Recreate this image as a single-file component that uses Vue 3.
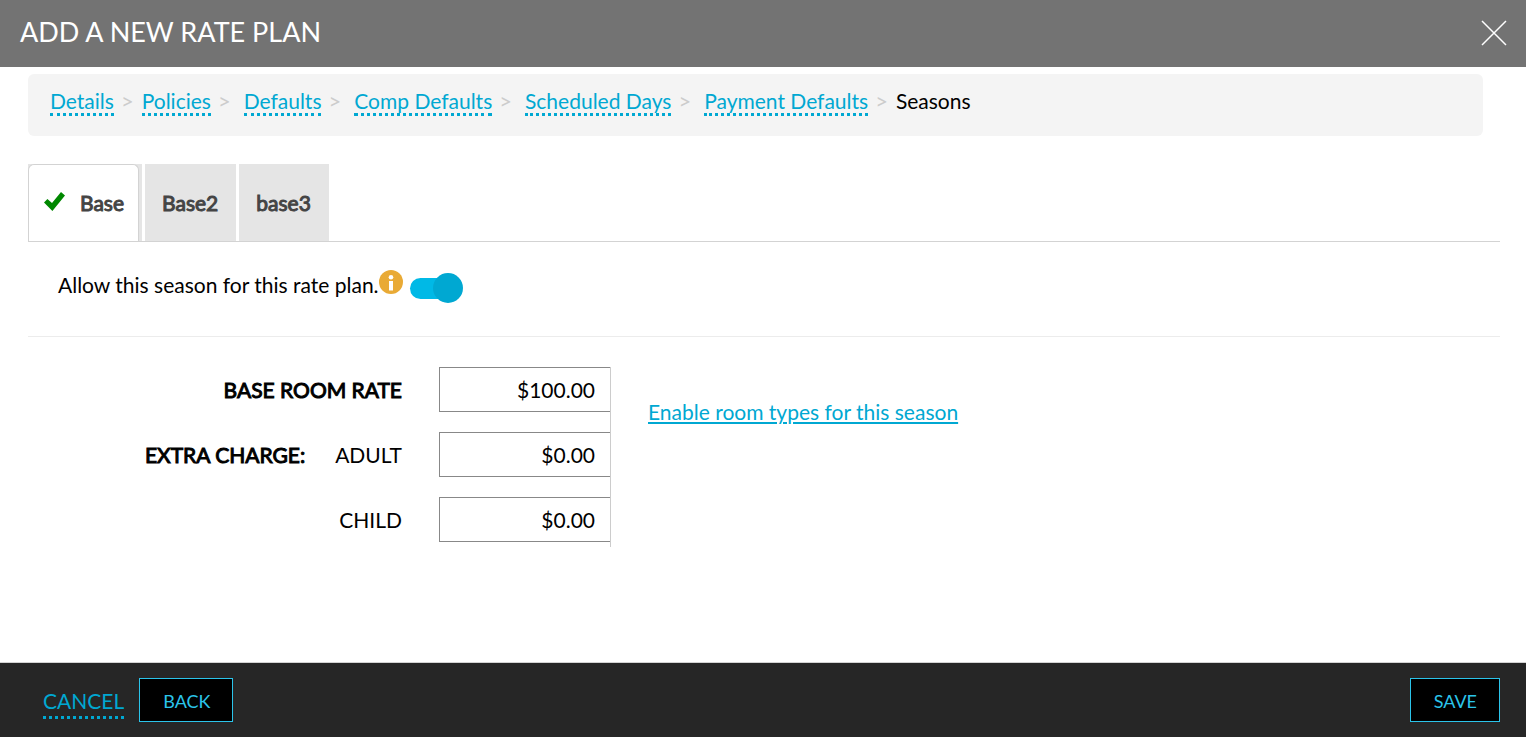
<script setup>
import { ref } from 'vue'

const crumbs = ['Details', 'Policies', 'Defaults', 'Comp Defaults', 'Scheduled Days', 'Payment Defaults']
const tabs = ['Base', 'Base2', 'base3']
const active = ref('Base')
const allowed = ref(true)
const base = ref('$100.00')
const adult = ref('$0.00')
const child = ref('$0.00')
</script>

<template>
  <div class="page">
    <header class="header">
      <h1>ADD A NEW RATE PLAN</h1>
      <button class="close" type="button" aria-label="Close">
        <svg width="26" height="26" viewBox="0 0 26 26" aria-hidden="true">
          <path d="M1 1L25 25M25 1L1 25" fill="none" stroke="#fff" stroke-width="1.5" />
        </svg>
      </button>
    </header>

    <main class="main">
      <nav class="crumbs" aria-label="Steps">
        <span v-for="c in crumbs" :key="c" class="crumb">
          <a href="#">{{ c }}</a><span class="sep">&gt;</span>
        </span>
        <span class="current">Seasons</span>
      </nav>

      <div class="tabs" role="tablist">
        <div v-for="t in tabs" :key="t" class="slot" :class="{ on: t === active }">
          <button class="tab" type="button" role="tab" :aria-selected="t === active" @click="active = t">
            <svg v-if="t === 'Base'" class="check" width="21" height="19" viewBox="0 0 21 19" aria-hidden="true">
              <path d="M0 10.5L3.4 7L8 11L17 0L21 3.4L8.4 19Z" fill="#008800" />
            </svg>
            {{ t }}
          </button>
        </div>
      </div>

      <section class="allow">
        <label for="allow">Allow this season for this rate plan.</label>
        <svg class="info" width="24" height="24" viewBox="0 0 24 24" aria-hidden="true">
          <circle cx="12" cy="12" r="12" fill="#e9aa35" />
          <circle cx="12" cy="7.2" r="2.3" fill="#fff" />
          <path d="M10 11H14V20.500H10Z" fill="#fff" />
        </svg>
        <input id="allow" v-model="allowed" class="switch" type="checkbox" role="switch" />
      </section>

      <section class="rates">
        <div class="fields">
          <div class="row">
            <label for="base"><b>BASE ROOM RATE</b></label>
            <input id="base" v-model="base" type="text" />
          </div>
          <div class="row">
            <label for="adult"><b>EXTRA CHARGE:</b><span class="kind">ADULT</span></label>
            <input id="adult" v-model="adult" type="text" />
          </div>
          <div class="row">
            <label for="child">CHILD</label>
            <input id="child" v-model="child" type="text" />
          </div>
        </div>
        <a class="enable" href="#">Enable room types for this season</a>
      </section>
    </main>

    <footer class="footer">
      <a class="cancel" href="#">CANCEL</a>
      <button class="btn" type="button">BACK</button>
      <button class="btn save" type="button">SAVE</button>
    </footer>
  </div>
</template>

<style>
body {
  margin: 0;
  background: #fff;
}
</style>

<style scoped>
.page {
  display: flex;
  flex-direction: column;
  min-height: 100vh;
  font-family: Lato, "Liberation Sans", sans-serif;
  font-size: 21px;
  line-height: 26px;
  color: #000;
}
.page * {
  box-sizing: border-box;
}
button,
input {
  font: inherit;
  margin: 0;
}
b {
  font-weight: 400;
  -webkit-text-stroke: 1px #000;
}
a {
  color: #00a8d2;
  text-decoration: none;
}
.header {
  display: flex;
  align-items: center;
  justify-content: space-between;
  height: 67px;
  padding: 0 19px 2px 20px;
  background: #737373;
}
h1 {
  margin: 0 0 2px;
  font-size: 27px;
  font-weight: 400;
  line-height: 34px;
  color: #fff;
}
.close {
  display: flex;
  padding: 0;
  border: 0;
  background: none;
  cursor: pointer;
}
.main {
  flex: 1;
  padding: 7px 26px 0 28px;
}
.crumbs {
  display: flex;
  align-items: flex-start;
  height: 62px;
  margin-right: 17px;
  padding: 14px 22px;
  border-radius: 6px;
  background: #f4f4f4;
}
.crumb {
  display: flex;
  margin-right: 13px;
}
.crumb:first-child,
.crumb:nth-child(6) {
  margin-right: 8px;
}
.crumb a {
  height: 28px;
  border-bottom: 3px dotted #00a8d2;
}
.sep {
  margin-left: 7px;
  font-size: 22px;
  color: #ccc;
}
.tabs {
  display: flex;
  gap: 3px;
  margin-top: 28px;
  border-bottom: 1px solid #d3d3d3;
}
.slot {
  background: #e5e5e5;
}
.slot.on {
  padding-right: 3px;
}
.tab {
  display: flex;
  align-items: center;
  height: 77px;
  padding: 0 17px 0 16px;
  border: 1px solid transparent;
  border-bottom: 0;
  background: none;
  color: #444;
  -webkit-text-stroke: 1px #444;
}
.on .tab {
  padding-right: 14px;
  padding-left: 15px;
  border-color: #d3d3d3;
  border-radius: 6px 6px 0 0;
  background: #fff;
}
.check {
  margin: 0 15px 3px 0;
}
.allow {
  display: flex;
  align-items: center;
  height: 95px;
  padding: 0 0 2px 30px;
  border-bottom: 1px solid #ececec;
}
.allow label {
  margin-bottom: 6px;
}
.info {
  margin: 0 7px 12px 0;
}
.switch {
  display: flex;
  align-items: center;
  width: 53px;
  height: 30px;
  appearance: none;
}
.switch::before {
  content: "";
  flex: none;
  width: 44px;
  height: 21px;
  border-radius: 11px;
  background: #00b9e6;
}
.switch::after {
  content: "";
  flex: none;
  width: 30px;
  height: 30px;
  margin-left: -44px;
  border-radius: 50%;
  background: #00a8d2;
}
.switch:checked::after {
  margin-left: -21px;
}
.rates {
  display: flex;
  align-items: flex-start;
  padding-top: 30px;
}
.fields {
  display: flex;
  flex-direction: column;
  gap: 20px;
  width: 583px;
  padding-bottom: 5px;
  border-right: 1px solid #ccc;
}
.row {
  display: flex;
  align-items: center;
  justify-content: flex-end;
  gap: 37px;
}
.kind {
  margin-left: 30px;
}
.row input {
  width: 171px;
  height: 45px;
  padding: 0 15px;
  border: 1px solid #888;
  border-right: 0;
  border-radius: 0;
  background: #fff;
  color: #000;
  text-align: right;
}
.enable {
  margin: 32px 0 0 37px;
  text-decoration: underline;
}
.footer {
  display: flex;
  align-items: center;
  height: 75px;
  padding: 0 26px 0 43px;
  border-top: 1px solid #d3d3d3;
  background: #262626;
}
.cancel {
  margin-right: 15px;
  padding: 6px 0 2px;
  border-bottom: 3px dotted #00a8d2;
}
.btn {
  height: 44px;
  padding: 2px 22px 0 23px;
  border: 1px solid #2bc4ea;
  background: #000;
  color: #2bc4ea;
  font-size: 18px;
}
.save {
  margin-left: auto;
}
</style>
